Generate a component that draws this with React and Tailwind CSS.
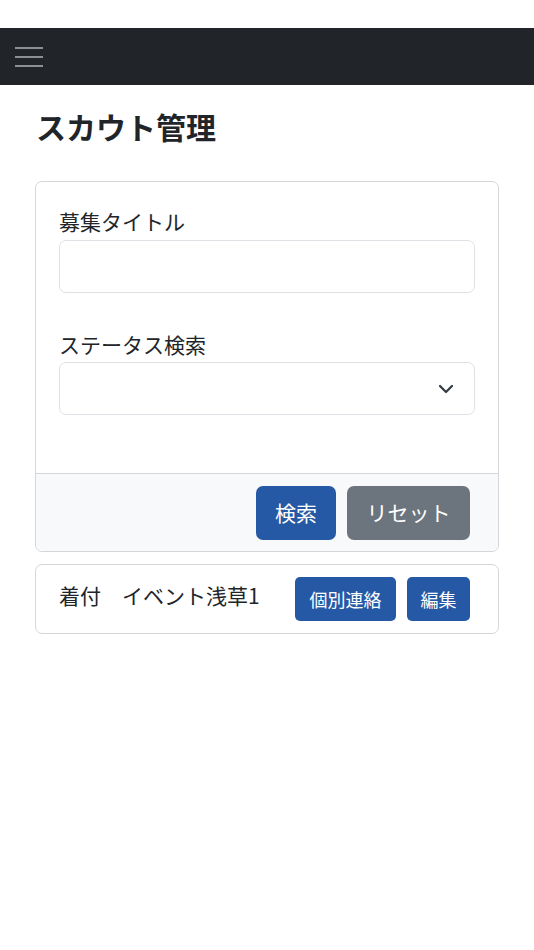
import React from "react";

export default function App() {
  return (
    <div
      className="min-h-[950px] bg-white text-[#212529]"
      style={{ fontFamily: '"Noto Sans CJK JP", "Noto Sans", sans-serif' }}
    >
      <div className="h-[28px]" />
      {/* Navbar */}
      <nav className="h-[57px] bg-[#212529] flex items-center px-[15px]">
        <button className="flex flex-col gap-[7px] w-[28px]">
          <span className="block h-[2px] bg-[#8c8f93]" />
          <span className="block h-[2px] bg-[#8c8f93]" />
          <span className="block h-[2px] bg-[#8c8f93]" />
        </button>
      </nav>

      <div className="px-[35px]">
        <h1 className="text-[30px] font-bold leading-none pt-[26px] pb-[40px] pl-[1px]">
          スカウト管理
        </h1>

        {/* Search card */}
        <div className="border border-[#d4d6d9] rounded-[7px] overflow-hidden">
          <div className="px-[23px] pt-[24px] pb-[58px]">
            <label className="block text-[21px] leading-[30px] mb-[4px]">募集タイトル</label>
            <input
              type="text"
              className="block w-full h-[53px] border border-[#dee2e6] rounded-[7px] bg-white px-3 outline-none"
            />
            <label className="block text-[21px] leading-[30px] mt-[36px] mb-[3px]">ステータス検索</label>
            <div className="relative h-[53px] border border-[#dee2e6] rounded-[7px] bg-white">
              <svg
                className="absolute right-[20px] top-[18px]"
                width="16"
                height="16"
                viewBox="0 0 16 16"
                fill="none"
                stroke="#343a40"
                strokeWidth="2.2"
                strokeLinecap="round"
                strokeLinejoin="round"
              >
                <path d="M2 5l6 6 6-6" />
              </svg>
            </div>
          </div>
          <div className="bg-[#f8f9fa] border-t border-[#d4d6d9] flex justify-end gap-[11px] pt-[12px] pb-[11px] pr-[28px]">
            <button className="h-[54px] w-[80px] rounded-[7px] bg-[#2559a5] text-white text-[21px]">検索</button>
            <button className="h-[54px] w-[123px] rounded-[7px] bg-[#6c757d] text-white text-[21px]">リセット</button>
          </div>
        </div>

        {/* Result card */}
        <div className="mt-[12px] border border-[#d4d6d9] rounded-[7px] flex items-start pl-[23px] pr-[28px] py-[12px]">
          <div className="flex-1 text-[21px] leading-[30px] pt-[3px]">着付　イベント浅草1</div>
          <div className="flex gap-[11px]">
            <button className="h-[44px] w-[101px] rounded-[5px] bg-[#2559a5] text-white text-[18px]">個別連絡</button>
            <button className="h-[44px] w-[63px] rounded-[5px] bg-[#2559a5] text-white text-[18px]">編集</button>
          </div>
        </div>
      </div>
    </div>
  );
}
